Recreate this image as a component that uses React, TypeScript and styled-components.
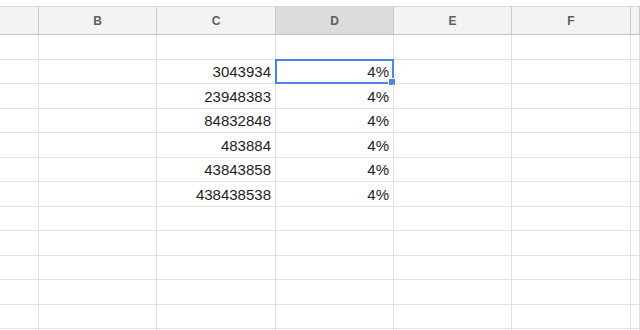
import React from "react";
import styled, { createGlobalStyle } from "styled-components";

const GlobalStyle = createGlobalStyle`
  html, body {
    margin: 0;
    padding: 0;
    background: #ffffff;
    overflow: hidden;
  }
  body {
    font-family: "Liberation Sans", Arial, Helvetica, sans-serif;
  }
`;

const COLUMNS = "39px 118px 119px 118px 118px 119px 1fr";

const Sheet = styled.div`
  width: 640px;
  height: 330px;
  padding-top: 6px;
  box-sizing: border-box;
  overflow: hidden;
  background: #ffffff;
`;

const HeaderRow = styled.div`
  display: grid;
  grid-template-columns: ${COLUMNS};
  height: 29px;
  box-sizing: border-box;
  border-top: 1px solid #d6d6d6;
  border-bottom: 1px solid #c4c4c4;
  background: #f3f3f3;
`;

const HeaderCell = styled.div<{ $active?: boolean }>`
  display: flex;
  align-items: center;
  justify-content: center;
  box-sizing: border-box;
  border-right: 1px solid #cbcbcb;
  background: ${(p) => (p.$active ? "#dcdcdc" : "transparent")};
  color: #5f5f5f;
  font-size: 12px;
  font-weight: 700;
`;

const Body = styled.div`
  display: grid;
  grid-auto-rows: 24.5px;
`;

const Row = styled.div`
  display: grid;
  grid-template-columns: ${COLUMNS};
  box-sizing: border-box;
  border-bottom: 1px solid #e2e2e2;
`;

const Cell = styled.div`
  position: relative;
  display: flex;
  align-items: center;
  justify-content: flex-end;
  box-sizing: border-box;
  padding: 1px 4px 0 0;
  border-right: 1px solid #e2e2e2;
  color: #1e1e1e;
  font-size: 15px;
  white-space: nowrap;
`;

const SelectionFrame = styled.div`
  position: absolute;
  left: -1px;
  top: -1px;
  right: -1px;
  bottom: -1px;
  border: 2px solid #4a86e8;
  pointer-events: none;
`;

const FillHandle = styled.div`
  position: absolute;
  right: -4px;
  bottom: -4px;
  width: 6px;
  height: 6px;
  background: #4a86e8;
  border: 1px solid #ffffff;
`;

const headers = ["", "B", "C", "D", "E", "F", ""];

const values: Array<[string, string]> = [
  ["", ""],
  ["3043934", "4%"],
  ["23948383", "4%"],
  ["84832848", "4%"],
  ["483884", "4%"],
  ["43843858", "4%"],
  ["438438538", "4%"],
  ["", ""],
  ["", ""],
  ["", ""],
  ["", ""],
  ["", ""],
  ["", ""],
];

export default function App() {
  return (
    <>
      <GlobalStyle />
      <Sheet>
        <HeaderRow>
          {headers.map((h, i) => (
            <HeaderCell key={i} $active={h === "D"}>
              {h}
            </HeaderCell>
          ))}
        </HeaderRow>
        <Body>
          {values.map(([c, d], r) => (
            <Row key={r}>
              <Cell />
              <Cell />
              <Cell>{c}</Cell>
              <Cell>
                {d}
                {r === 1 && (
                  <SelectionFrame>
                    <FillHandle />
                  </SelectionFrame>
                )}
              </Cell>
              <Cell />
              <Cell />
              <Cell />
            </Row>
          ))}
        </Body>
      </Sheet>
    </>
  );
}
